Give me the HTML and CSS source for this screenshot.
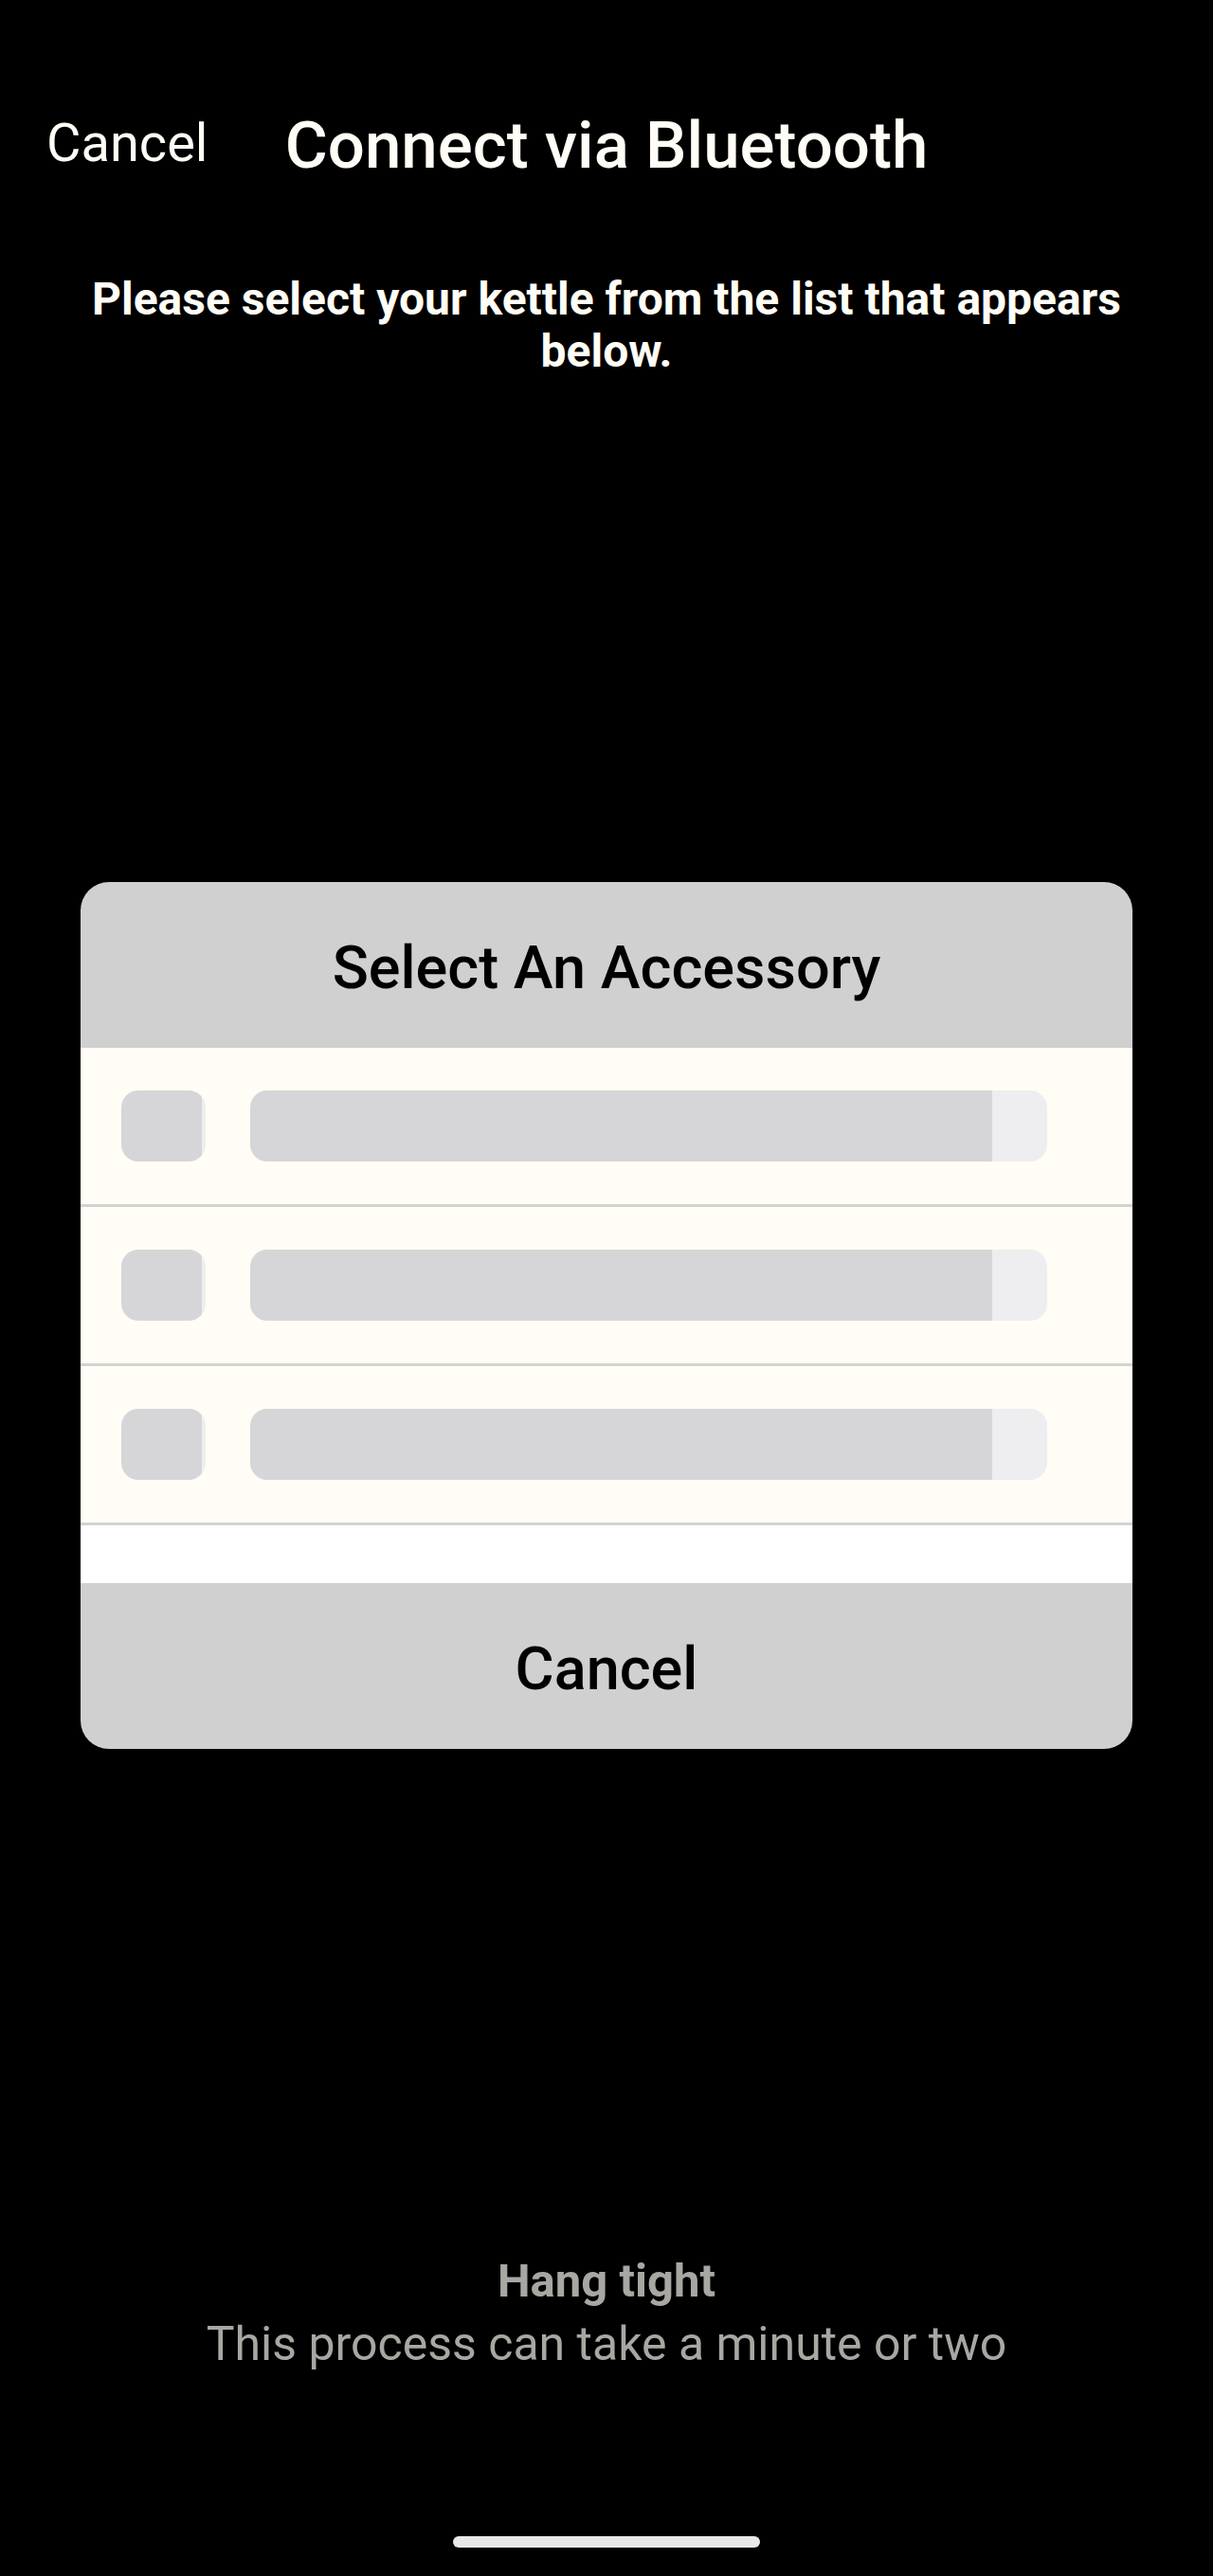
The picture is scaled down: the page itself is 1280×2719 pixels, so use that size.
FILE: index.html
```html
<!DOCTYPE html>
<html lang="en">
<head>
    <meta charset="UTF-8">
    <meta name="viewport" content="width=device-width, initial-scale=1.0">
    <title>Connect via Bluetooth</title>
    <link rel="stylesheet" href="styles.css">
</head>
<body>

    <div class="screen">
        <div class="top-bar">
            <span class="top-cancel">Cancel</span>
            <h1>Connect via Bluetooth</h1>
            <span></span>
        </div>

        <p class="intro">Please select your kettle from the list that appears below.</p>

        <!-- Accessory picker -->
        <div class="picker">
            <div class="picker-title">Select An Accessory</div>

            <div class="picker-row">
                <div class="ph-icon"></div>
                <div class="ph-name"></div>
            </div>
            <div class="picker-row">
                <div class="ph-icon"></div>
                <div class="ph-name"></div>
            </div>
            <div class="picker-row">
                <div class="ph-icon"></div>
                <div class="ph-name"></div>
            </div>

            <div class="picker-space"></div>
            <div class="picker-cancel">Cancel</div>
        </div>

        <div class="wait">
            <div class="wait-title">Hang tight</div>
            <div class="wait-text">This process can take a minute or two</div>
        </div>

        <div class="home-bar"></div>
    </div>

</body>
</html>
```

FILE: styles.css
```css
body {
    margin: 0;
    background-color: #000;
    font-family: Roboto, "Liberation Sans", sans-serif;
}

.screen {
    height: 2719px;
    padding-top: 109px;
    box-sizing: border-box;
    display: flex;
    flex-direction: column;
    align-items: center;
}

.top-bar {
    width: 100%;
    display: grid;
    grid-template-columns: 1fr auto 1fr;
    color: #fffdf5;
}

.top-cancel {
    font-size: 56px;
    line-height: 84px;
    padding-left: 49px;
}

h1 {
    margin: 0;
    font-size: 69px;
    font-weight: 500;
    line-height: 90px;
}

.intro {
    margin: 89px 0 0;
    padding: 0 50px;
    color: #fffdf5;
    font-size: 48px;
    font-weight: 700;
    line-height: 55px;
    text-align: center;
}

.picker {
    margin-top: 533px;
    width: 1110px;
    border-radius: 30px;
    overflow: hidden;
}

.picker-title,
.picker-cancel {
    height: 175px;
    box-sizing: border-box;
    padding-top: 7px;
    line-height: 168px;
    background-color: #d0d0d0;
    color: #000;
    font-size: 63px;
    font-weight: 500;
    text-align: center;
}

.picker-row {
    display: flex;
    gap: 47px;
    padding: 45px 90px 45px 43px;
    background-color: #fffdf5;
    border-bottom: 3px solid #d3d3d3;
}

.ph-icon,
.ph-name {
    height: 75px;
    border-radius: 18px;
}

.ph-icon {
    width: 89px;
    background: linear-gradient(to right, #d6d6d8 95%, #eeeef0 95%);
}

.ph-name {
    flex: 1;
    background: linear-gradient(to right, #d6d6d8 93.1%, #eeeef0 93.1%);
}

.picker-space {
    height: 61px;
    background-color: #fff;
}

.wait {
    margin-top: 532px;
    color: #a8a7a2;
    text-align: center;
}

.wait-title {
    font-size: 49px;
    font-weight: 700;
    line-height: 60px;
}

.wait-text {
    font-size: 50px;
    line-height: 72px;
}

.home-bar {
    margin-top: 167px;
    width: 324px;
    height: 12px;
    border-radius: 6px;
    background-color: #e8e8e8;
}
```
